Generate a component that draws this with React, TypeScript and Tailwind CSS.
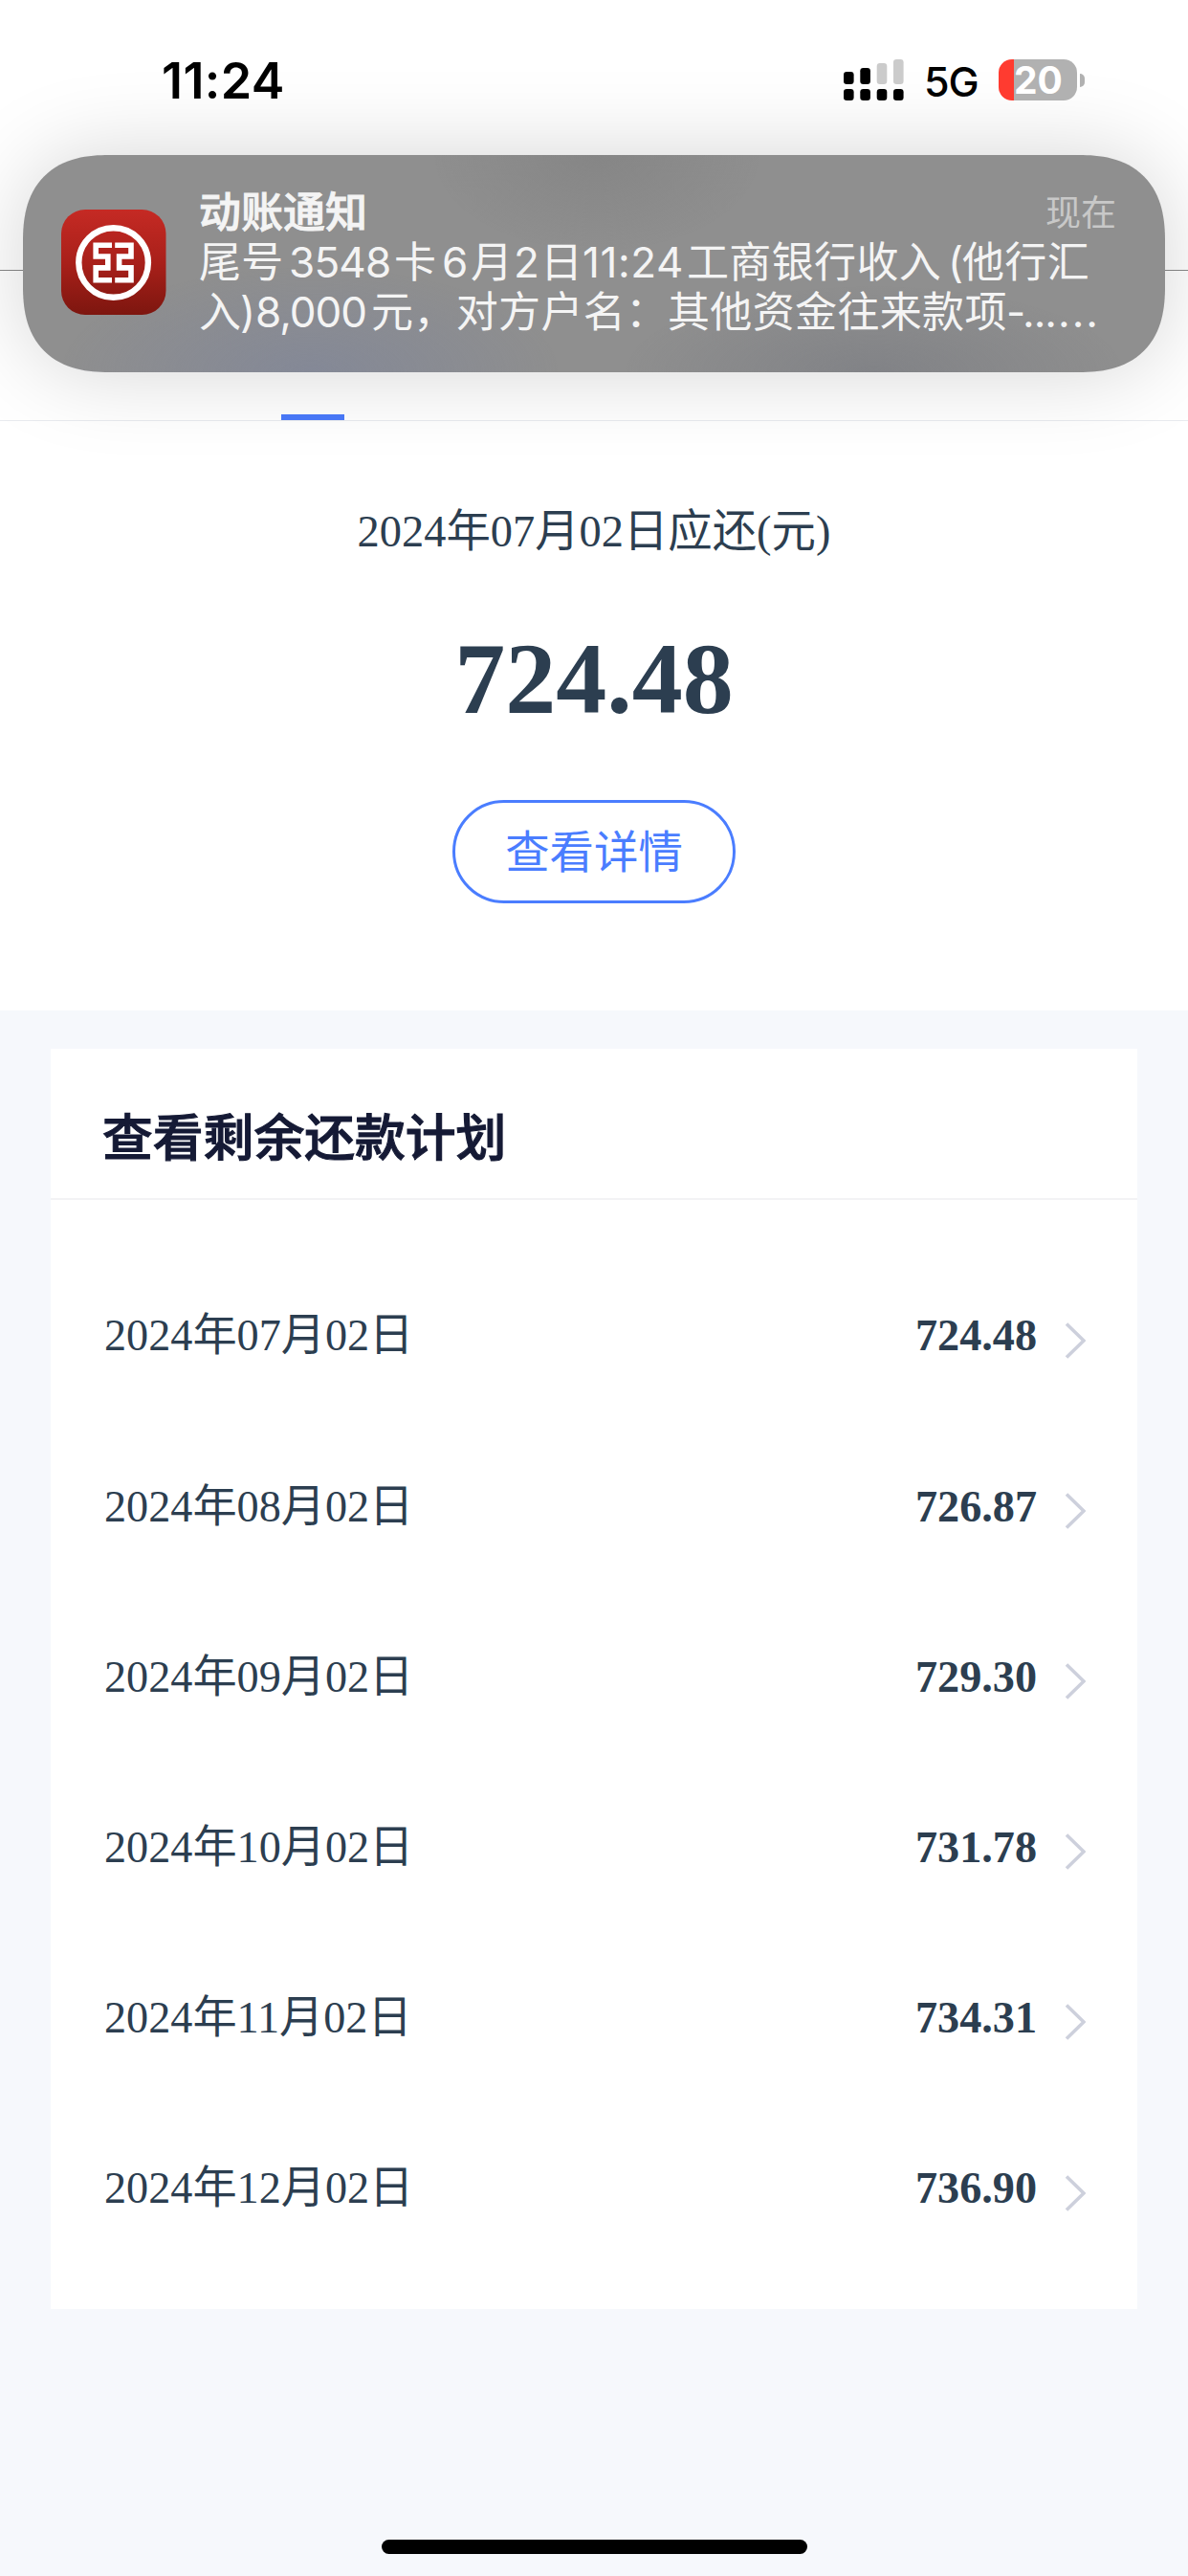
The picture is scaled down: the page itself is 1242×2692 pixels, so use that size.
import React from "react";

const SANS = "font-['Inter','Noto_Sans_CJK_SC',sans-serif]";
const SERIF = "font-['Liberation_Serif','Noto_Sans_CJK_SC',serif]";

const plan = [
  { date: "2024年07月02日", amount: "724.48" },
  { date: "2024年08月02日", amount: "726.87" },
  { date: "2024年09月02日", amount: "729.30" },
  { date: "2024年10月02日", amount: "731.78" },
  { date: "2024年11月02日", amount: "734.31" },
  { date: "2024年12月02日", amount: "736.90" },
];

function SignalIcon() {
  return (
    <svg width="63" height="43" viewBox="0 0 63 43" className="ml-auto">
      <g fill="#000">
        <rect x="0" y="13" width="10.6" height="13" rx="3.2" />
        <rect x="17.3" y="9" width="10.6" height="17" rx="3.2" />
        <rect x="0" y="31" width="10.6" height="12" rx="3.2" />
        <rect x="17.3" y="31" width="10.6" height="12" rx="3.2" />
        <rect x="34.7" y="31" width="10.6" height="12" rx="3.2" />
        <rect x="52" y="31" width="10.6" height="12" rx="3.2" />
      </g>
      <g fill="#cbcbcb">
        <rect x="34.7" y="4" width="10.6" height="22" rx="3.2" />
        <rect x="52" y="0" width="10.6" height="26" rx="3.2" />
      </g>
    </svg>
  );
}

function Battery() {
  return (
    <div className="flex items-center">
      <div className="flex h-[43px] w-[82px] items-center rounded-[14px] bg-[linear-gradient(to_right,#ff3b30_16px,#b1b1b1_16px)] pl-[16px]">
        <span className="text-[39px] leading-[43px] font-bold text-white">20</span>
      </div>
      <div className="ml-[3px] h-[14px] w-[5px] rounded-r-full bg-[#b1b1b1]" />
    </div>
  );
}

function BankIcon() {
  return (
    <svg width="110" height="110" viewBox="0 0 110 110" className="shrink-0">
      <defs>
        <linearGradient id="bank" x1="0" y1="0" x2="0" y2="1">
          <stop offset="0" stopColor="#c52a24" />
          <stop offset="0.5" stopColor="#a9201a" />
          <stop offset="1" stopColor="#7d160f" />
        </linearGradient>
      </defs>
      <rect width="109.5" height="110" rx="25" fill="url(#bank)" />
      <circle cx="54.6" cy="55.5" r="36.3" fill="none" stroke="#fff" strokeWidth="6.4" />
      <g fill="none" stroke="#fff" strokeWidth="5.6">
        <path d="M53 37.2H36.2V49H48.8V60.9H36.2V73.8H53" />
        <path d="M56.2 37.2H73V49H60.6V60.9H73V73.8H56.2" />
      </g>
    </svg>
  );
}

function Run({ w, children }: { w: string; children: React.ReactNode }) {
  return <span className={`inline-block whitespace-nowrap ${w}`}>{children}</span>;
}

function Notification() {
  return (
    <div
      className={`absolute top-[162px] left-[24px] flex h-[227px] w-[1194px] items-center rounded-[76px] bg-[#8f8f8f] pl-[40px] shadow-[0_0_90px_rgba(0,0,0,0.17)] supports-[corner-shape:squircle]:rounded-[90px] supports-[corner-shape:squircle]:[corner-shape:superellipse(1.29)] ${SANS}`}
    >
      <div className="absolute inset-0 rounded-[76px] bg-[radial-gradient(ellipse_260px_110px_at_300px_227px,rgba(126,133,155,0.65),transparent),radial-gradient(ellipse_260px_90px_at_890px_227px,rgba(122,124,130,0.65),transparent),radial-gradient(ellipse_170px_100px_at_600px_0px,rgba(130,130,130,0.7),transparent)]" />
      <div className="relative flex items-center pb-[3px]">
        <BankIcon />
        <div className="ml-[34px] w-[959px] text-[#f4f4f4]">
          <div className="flex h-[51px] items-center justify-between">
            <span className="text-[44px] leading-[51px] font-medium [-webkit-text-stroke:0.9px_#f4f4f4]">动账通知</span>
            <span className="text-[37px] leading-[51px] text-[#c8c8c8]">现在</span>
          </div>
          <div className="flex h-[52px] text-[44px] leading-[52px] tracking-[0.35px]">
            <Run w="w-[94px]">尾号</Run>
            <Run w="w-[110px] tracking-[-0.8px]">3548</Run>
            <Run w="w-[50px]">卡</Run>
            <Run w="w-[30px]">6</Run>
            <Run w="w-[45px]">月</Run>
            <Run w="w-[28px]">2</Run>
            <Run w="w-[44px]">日</Run>
            <Run w="w-[109px] tracking-[0.6px]">11:24</Run>
            <Run w="w-[273px]">工商银行收入</Run>
            <Run w="w-[15px]">(</Run>
            <Run w="w-[134px]">他行汇</Run>
          </div>
          <div className="flex h-[52px] text-[44px] leading-[52px] tracking-[0.35px]">
            <Run w="w-[43px]">入</Run>
            <Run w="w-[16px]">)</Run>
            <Run w="w-[121px] tracking-[-1px]">8,000</Run>
            <Run w="w-[310px]">元，对方户名：</Run>
            <Run w="w-[354px]">其他资金往来款项</Run>
            <Run w="w-[17px]">-</Run>
            <Run w="w-[37px] tracking-[-1px]">...</Run>
            <Run w="w-[47px] tracking-[2px]">...</Run>
          </div>
        </div>
      </div>
    </div>
  );
}

export default function App() {
  return (
    <div className={`relative flex h-[2692px] w-[1242px] flex-col overflow-hidden bg-[#f6f8fc] ${SERIF}`}>
      <header className="shrink-0 bg-white">
        <div className={`flex h-[283px] items-start border-b border-[#8a8a8a] ${SANS}`}>
          <div className="relative z-10 flex w-full items-center pt-[62px] pr-[108px] pl-[169px] text-black">
            <span className="h-[43px] text-[52px] leading-[45px] font-semibold tracking-[0.4px]">11:24</span>
            <SignalIcon />
            <span className="ml-[21px] h-[43px] w-[78px] text-[43px] leading-[47px] font-medium tracking-[-1px]">5G</span>
            <Battery />
          </div>
        </div>
        <div className="flex h-[157px] items-end border-b border-[#e9ebef] pl-[294px]">
          <div className="h-[6px] w-[66px] bg-[#4a7afb]" />
        </div>
      </header>

      <section className="flex h-[616px] shrink-0 flex-col items-center bg-white text-[#2c3e50]">
        <p className="mt-[84px] text-[46.4px] leading-[64px]">2024年07月02日应还(元)</p>
        <p className="mt-[62px] text-[106px] leading-[120px] font-bold">724.48</p>
        <button className="mt-[66px] h-[108px] w-[296px] rounded-full border-3 border-[#4a7dff] pt-[4px] text-[46.4px] leading-[60px] text-[#4a7dff]">
          查看详情
        </button>
      </section>

      <section className="mt-10 mr-[53px] ml-[53px] h-[1317px] shrink-0 bg-white">
        <h2 className="flex h-[158px] items-center border-b-2 border-[#f3f3f5] pt-[31px] pl-[54px] text-[52.8px] leading-[60px] font-medium text-[#151a35] [-webkit-text-stroke:1.1px_#151a35]">
          查看剩余还款计划
        </h2>
        <ul className="pt-[53px]">
          {plan.map((row) => (
            <li key={row.date} className="flex h-[178.2px] items-center pr-[54px] pl-[56px] text-[46.2px] text-[#2c3e50]">
              <span>{row.date}</span>
              <span className="ml-auto font-bold">{row.amount}</span>
              <svg width="22" height="40" viewBox="0 0 22 40" className="mt-[9px] ml-[29px]">
                <path d="M2 2.5 20 20 2 37.5" fill="none" stroke="#cdd0dc" strokeWidth="3.6" />
              </svg>
            </li>
          ))}
        </ul>
      </section>

      <div className="mx-auto mt-auto mb-[23px] h-[15px] w-[445px] rounded-full bg-black" />
      <Notification />
    </div>
  );
}
